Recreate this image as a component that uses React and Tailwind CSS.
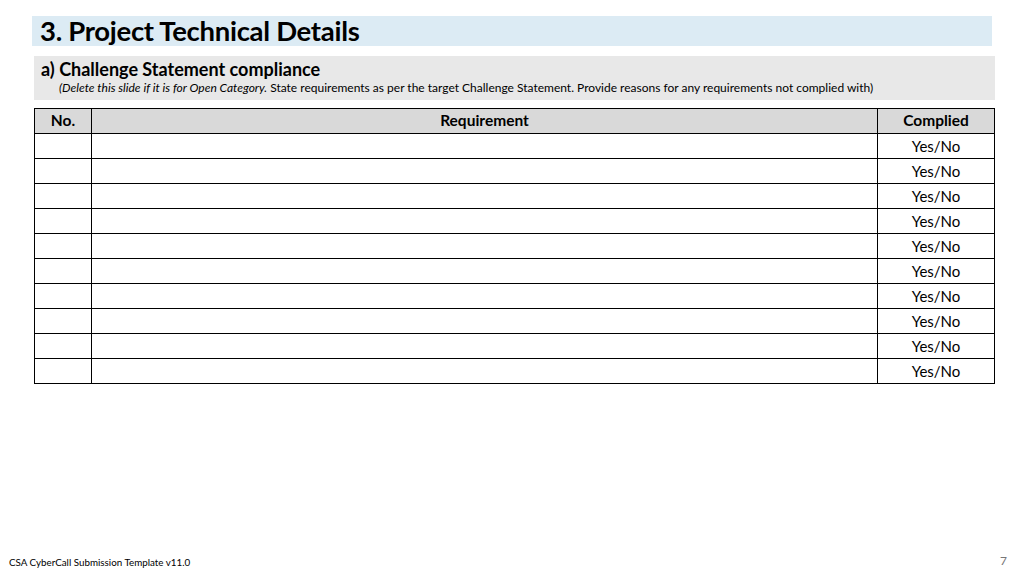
import React from 'react';

const rows = Array.from({ length: 10 });

const App = () => {
  return (
    <div className="w-[1024px] h-[576px] bg-white flex flex-col font-['Lato','Open_Sans',sans-serif] text-black overflow-hidden">
      <div className="ml-[32px] mt-[16px] w-[960px] h-[30px] bg-[#dcebf4] flex items-center pl-[8px]">
        <h1 className="text-[27.5px] font-bold tracking-[-0.3px] leading-none">3. Project Technical Details</h1>
      </div>

      <div className="ml-[34px] mt-[10px] w-[961px] h-[44px] bg-[#e8e8e8] pl-[7px] pt-[3px]">
        <h2 className="text-[18px] font-bold leading-[21px]">a) Challenge Statement compliance</h2>
        <p className="text-[12px] leading-[16px] pl-[18px]">
          <em>(Delete this slide if it is for Open Category.</em> State requirements as per the target Challenge Statement. Provide reasons for any requirements not complied with)
        </p>
      </div>

      <table className="ml-[34px] mt-[8px] w-[961px] border-collapse text-[15.5px]">
        <thead>
          <tr className="h-[25px] bg-[#d9d9d9]">
            <th className="w-[57px] border border-black font-bold p-0">No.</th>
            <th className="border border-black font-bold p-0">Requirement</th>
            <th className="w-[117px] border border-black font-bold p-0">Complied</th>
          </tr>
        </thead>
        <tbody>
          {rows.map((_, i) => (
            <tr key={i} className="h-[25px]">
              <td className="border border-black p-0"></td>
              <td className="border border-black p-0"></td>
              <td className="border border-black p-0 text-center text-[15px]">Yes/No</td>
            </tr>
          ))}
        </tbody>
      </table>

      <div className="mt-auto mb-[6px] flex justify-between items-end px-[9px]">
        <span className="text-[9.8px]">CSA CyberCall Submission Template v11.0</span>
        <span className="text-[12px] text-[#777] mr-[8px]">7</span>
      </div>
    </div>
  );
};

export default App;
